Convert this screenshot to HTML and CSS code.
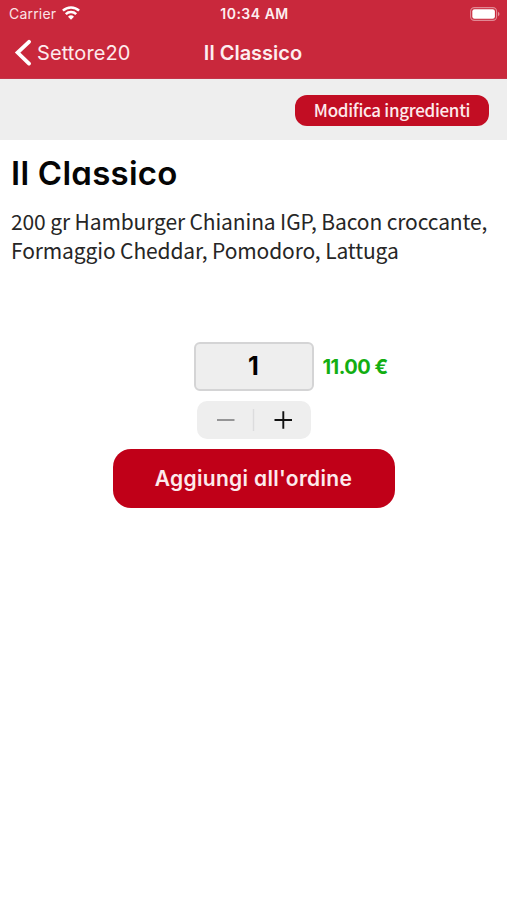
FILE: index.html
```html
<!DOCTYPE html>
<html lang="it">
<head>
<meta charset="utf-8">
<title>Il Classico</title>
<link rel="stylesheet" href="styles.css">
</head>
<body>
<header class="top">
  <div class="status">
    <div class="carrier"><span>Carrier</span>
      <svg class="wifi" width="18" height="14" viewBox="0 0 18 14"><path d="M.9 4.7a11.8 11.8 0 0 1 16.2 0M3.8 8.2a7.4 7.4 0 0 1 10.4 0" fill="none" stroke="#fff" stroke-width="2.5"/><path d="M6 10.7a4.4 4.4 0 0 1 6 0L9 13.8z" fill="#fff"/></svg>
    </div>
    <time class="clock">10:34 AM</time>
    <svg class="battery" width="30" height="14" viewBox="0 0 30 14"><rect x=".6" y=".6" width="26" height="12.8" rx="3.8" fill="none" stroke="#fff" stroke-opacity=".45" stroke-width="1.1"/><rect x="2.3" y="2.3" width="22.6" height="9.4" rx="2.2" fill="#fff"/><path d="M28 4.8v4.4c2-.9 2-3.5 0-4.4z" fill="#fff" opacity=".5"/></svg>
  </div>
  <nav class="nav">
    <a class="back"><svg width="17" height="28" viewBox="0 0 17 28"><path d="M15 2.8 3.6 13.6 15 24.6" fill="none" stroke="#fff" stroke-width="3.8" stroke-linecap="round"/></svg><span>Settore20</span></a>
    <span class="title">Il Classico</span>
  </nav>
</header>
<div class="toolbar"><button class="edit">Modifica ingredienti</button></div>
<main class="content">
  <h1>Il Classico</h1>
  <p class="desc">200 gr Hamburger Chianina IGP, Bacon croccante, Formaggio Cheddar, Pomodoro, Lattuga</p>
  <div class="order">
    <div class="quantity"><div class="amount">1</div><span class="price">11.00 €</span></div>
    <div class="stepper">
      <svg width="114" height="38" viewBox="0 0 114 38"><path d="M20 19h17.5" stroke="#8b8b8c" stroke-width="1.8"/><path d="M56.5 8v22" stroke="#dcdcdd" stroke-width="1.4"/><path d="M77.5 19H95M86.3 10.3v17.4" stroke="#111" stroke-width="1.9"/></svg>
    </div>
    <button class="add">Aggiungi all'ordine</button>
  </div>
</main>
</body>
</html>
```
FILE: styles.css
```css
* { box-sizing: border-box; }
body { margin: 0; background: #fff; font-family: Inter, sans-serif; }
button { border: 0; padding: 0; color: #fff; }
svg { display: block; flex: none; }

.top { height: 79px; background: #c9283c; color: #fff; border-bottom: 1px solid #c4354a; }
.status { height: 26px; display: grid; grid-template-columns: 1fr auto 1fr; align-items: center; padding: 1px 7px 0 9px; }
.carrier { display: flex; align-items: center; gap: 6px; font-size: 14px; letter-spacing: .2px; color: #fbe3e6; }
.wifi { margin-top: -2px; }
.clock { font-size: 14px; font-weight: 600; letter-spacing: .5px; color: #fdeef0; }
.battery { justify-self: end; }

.nav { height: 52px; display: grid; grid-template-columns: 1fr auto 1fr; align-items: center; padding: 1px 15px 0 14px; }
.back { display: flex; align-items: center; gap: 6px; font-size: 20px; letter-spacing: .1px; color: #fdebed; }
.title { font-size: 20px; font-weight: 600; color: #fdeef0; }

.toolbar { height: 61px; background: #eee; display: flex; justify-content: flex-end; align-items: center; padding: 0 18px 0 0; }
.edit { width: 194px; height: 31px; margin-top: 1px; border-radius: 12px; background: #c20d23; color: #fdeaec; font: 500 17px/30px "Noto Sans CJK JP", sans-serif; letter-spacing: -.3px; padding-bottom: 1px; }

.content { padding: 12px 11px 0; }
h1 { margin: 0; font-size: 33px; font-weight: 600; line-height: 42px; letter-spacing: .25px; font-feature-settings: "cv11"; color: #050505; }
.desc { margin: 13px 0 0; height: 87px; font: 400 21px/29px "Noto Sans CJK JP", sans-serif; letter-spacing: -.12px; color: #262626; }
.order { display: flex; flex-direction: column; align-items: center; margin-top: 48px; font-feature-settings: "cv11"; }
.quantity { width: 120px; display: flex; align-items: center; gap: 9px; white-space: nowrap; }
.amount { flex: none; width: 120px; height: 49px; border: 2px solid #d4d4d5; border-radius: 6px; background: #eee; text-align: center; font-size: 25px; font-weight: 700; line-height: 44px; color: #000; }
.price { font-size: 20px; font-weight: 700; letter-spacing: -.5px; color: #12ae12; }
.stepper { margin-top: 10px; width: 114px; height: 38px; border-radius: 10px; background: #eee; }
.add { margin-top: 10px; width: 282px; height: 59px; border-radius: 18px; background: #c00018; color: #fdeaec; font: 600 21px/59px Inter, sans-serif; letter-spacing: .32px; font-feature-settings: "cv11"; }
```
